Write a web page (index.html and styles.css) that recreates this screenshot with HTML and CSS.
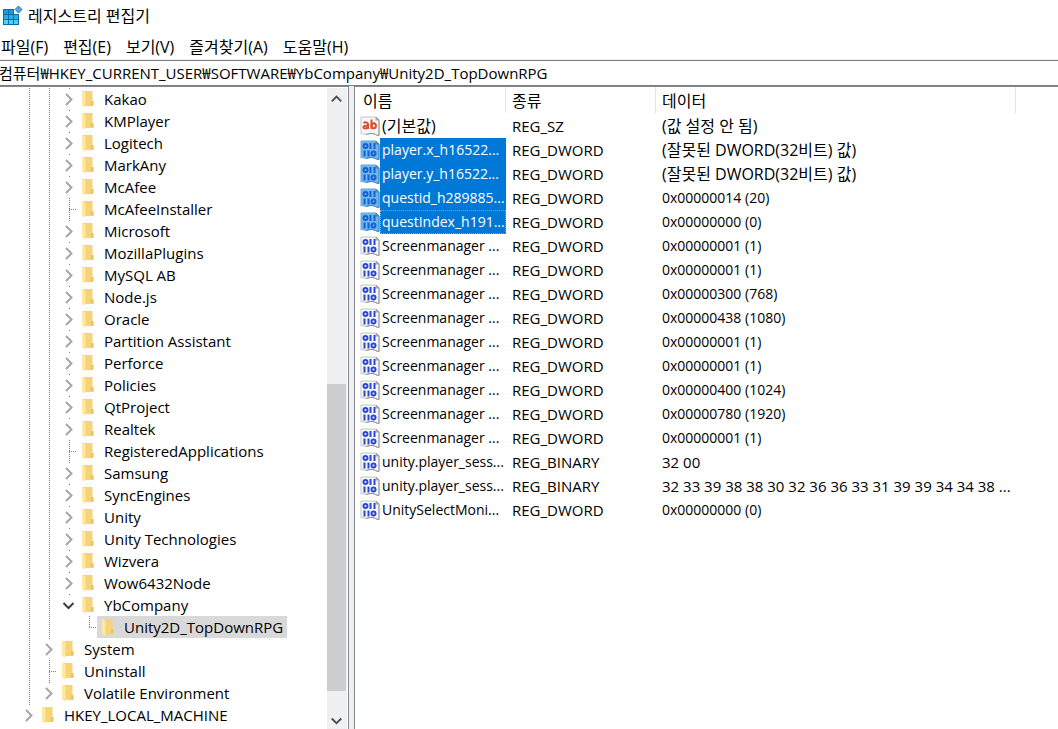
FILE: index.html
```html
<!DOCTYPE html>
<html lang="ko">
<head>
<meta charset="utf-8">
<title>레지스트리 편집기</title>
<link rel="stylesheet" href="styles.css">
</head>
<body>
<svg class="defs" aria-hidden="true">
  <symbol id="folder" viewBox="0 0 14 18">
    <path d="M2 1h9.500v10.500h.9V16H2z" fill="#f5d376"/>
    <path d="M10 11h2.500v4.500H10z" fill="#eec45e"/>
    <path d="M1 1h1.500L5 3.200v12L4 18 1 15.500z" fill="#ffe8a2"/>
    <path d="M4.500 3.500v12" stroke="#f9dd8b"/>
  </symbol>
  <symbol id="page" viewBox="0 0 20 20">
    <path class="paper" d="M1 1h15l3 3v15.500c-3 0-4-2-7-2s-4 .8-6 .8-3-.8-5-.8z"/>
    <path class="edge" d="M16 1l3 3v15.500c-3 0-4-2-7-2s-4 .8-6 .8"/>
    <path class="fold" d="M15.500 1v3.500H19z"/>
  </symbol>
  <symbol id="binary" viewBox="0 0 20 20">
    <use href="#page"/>
    <g class="digits">
      <ellipse cx="5.500" cy="6" rx="2" ry="2"/>
      <path d="M10.500 3v6M14.500 3v6M4.500 10.500v6M8.500 10.500v6"/>
      <ellipse cx="13.500" cy="13.500" rx="2" ry="2"/>
    </g>
  </symbol>
  <symbol id="string" viewBox="0 0 20 20">
    <use href="#page"/>
    <g fill="none" stroke="#d94d2c" stroke-width="2">
      <path d="M3.500 7c1.500-1 4.500-1 4.500 1.200V13M8 9.500c-2 0-4.500 0-4.500 1.700C3.500 13 7 13 8 11"/>
      <path d="M11.500 3.500V13"/><ellipse cx="13.700" cy="9.700" rx="2.200" ry="2.500"/>
    </g>
  </symbol>
  <symbol id="right" viewBox="0 0 20 22"><path d="M7 6l5.500 5.500L7 17" fill="none" stroke="#a6a6a6" stroke-width="2"/></symbol>
  <symbol id="down" viewBox="0 0 20 22"><path d="M4.500 9l5 5 5-5" fill="none" stroke="#404040" stroke-width="2"/></symbol>
</svg>

<header class="titlebar">
  <svg class="app-icon" viewBox="0 0 20 20" aria-hidden="true">
    <path d="M0 3h16v16H0z" fill="#0c6ea6"/>
    <path d="M1 4h4v4H1zM6 4h4v4H6z" fill="#1b9bd7"/>
    <path d="M1 9h4v4H1zM6 9h4v4H6zM11 9h4v4h-4z" fill="#24b1e8"/>
    <path d="M1 14h4v4H1zM6 14h4v4H6zM11 14h4v4h-4z" fill="#4fd0f8"/>
    <path d="M11 2h6v6h-6z" fill="#fff"/>
    <path d="M15.500 0l3.500 3.500L15.500 7 12 3.500z" fill="#43aede" stroke="#1d7fb4"/>
  </svg>
  <h1 class="title">레지스트리 편집기</h1>
</header>
<nav class="menubar">
  <button class="menu">파일(F)</button><button class="menu">편집(E)</button><button class="menu">보기(V)</button><button class="menu">즐겨찾기(A)</button><button class="menu">도움말(H)</button>
</nav>
<input class="address" aria-label="주소" value="컴퓨터₩HKEY_CURRENT_USER₩SOFTWARE₩YbCompany₩Unity2D_TopDownRPG">

<main class="panes">
  <section class="tree-pane">
    <ul class="tree" id="tree"></ul>
    <div class="scrollbar">
      <button class="scroll-button" aria-label="위로"><svg viewBox="0 0 20 24"><path d="M5 15l5-5 5 5" fill="none" stroke="#505050" stroke-width="2"/></svg></button>
      <div class="track-before"></div><div class="thumb"></div><div class="track-after"></div>
      <button class="scroll-button" aria-label="아래로"><svg viewBox="0 0 20 24"><path d="M5 12l5 5 5-5" fill="none" stroke="#505050" stroke-width="2"/></svg></button>
    </div>
  </section>
  <div class="splitter"></div>
  <section class="list-pane">
    <table class="values">
      <colgroup><col class="col-name"><col class="col-type"><col class="col-data"><col></colgroup>
      <thead><tr><th>이름</th><th>종류</th><th>데이터</th><th></th></tr></thead>
      <tbody id="values"></tbody>
    </table>
  </section>
</main>
<script src="app.js"></script>
</body>
</html>
```
FILE: styles.css
```css
* { box-sizing: border-box; }
body {
  margin: 0;
  height: 100vh;
  display: flex;
  flex-direction: column;
  overflow: hidden;
  background: #fff;
  color: #000;
  font: 15px/22px "Open Sans", "Noto Sans CJK KR", sans-serif;
}
button, input { font: inherit; color: inherit; border: 0; padding: 0; background: none; }
svg { display: block; }
.defs { position: absolute; width: 0; height: 0; }

.titlebar { display: flex; align-items: center; gap: 5px; height: 32px; padding-left: 3px; }
.app-icon { width: 20px; height: 20px; }
.title { margin: 0; font-size: 16px; font-weight: 400; }
.menubar { display: flex; align-items: center; gap: 15px; height: 28px; padding: 2px 0 0 1px; border-bottom: 1px solid #f0f0f0; font-size: 16px; }
.address { height: 26px; flex: none; margin-left: -1px; padding-bottom: 2px; border: solid #7a7a80; border-width: 1px 0; border-radius: 0; outline: 0; }

.panes { display: flex; flex: 1; min-height: 0; background: #f0f0f0; }
.tree-pane { display: flex; width: 349px; background: #fff; border: solid #828790; border-width: 1px 1px 0 0; }
.tree { flex: 1; margin: 0; padding: 1px 0 0 19px; list-style: none; overflow: hidden; }
.node { display: flex; height: 22px; white-space: nowrap; }
.cell { flex: none; width: 20px; height: 22px; }
.line { background: repeating-linear-gradient(#808080 0 1px, transparent 1px 2px) 10px 0 / 1px 100% no-repeat; }
.branch {
  background:
    repeating-linear-gradient(#808080 0 1px, transparent 1px 2px) 10px 0 / 1px 100% no-repeat,
    repeating-linear-gradient(90deg, #808080 0 1px, transparent 1px 2px) 10px 11px / 8px 1px no-repeat;
}
.branch.last { background-size: 1px 12px, 8px 1px; }
.expander { background: linear-gradient(#808080, #808080) 10px 0 / 1px 1px no-repeat; }
.item { display: flex; align-items: center; gap: 9px; margin-left: -2px; padding: 0 4px; }
.item.selected { background: #d9d9d9; }
.folder { width: 14px; height: 18px; }

.scrollbar { display: flex; flex-direction: column; width: 21px; padding-right: 2px; background: linear-gradient(#f0f0f0, #f0f0f0) 0 1px / 20px 100% no-repeat; }
.scroll-button { height: 22px; flex: none; }
.scroll-button svg { width: 19px; height: 23px; }
.track-before { flex: 275; }
.thumb { flex: 307; background: #cdcdcd; }
.track-after { flex: 16; }

.splitter { width: 5px; }
.list-pane { flex: 1; min-width: 0; background: #fff; border: solid #828790; border-width: 1px 0 0 1px; overflow: hidden; }
.values { width: 100%; table-layout: fixed; border-collapse: separate; border-spacing: 0; }
.col-name { width: 151px; }
.col-type { width: 150px; }
.col-data { width: 360px; }
th, td { padding: 0 0 0 6px; text-align: left; font-weight: 400; white-space: nowrap; }
th { height: 27px; font-size: 16px; background: linear-gradient(#e5e5e5, #e5e5e5) right 0 / 1px 26px no-repeat; }
th:first-child { padding-left: 8px; }
th:last-child { background: none; }
td { height: 24px; }
td:first-child { padding-left: 5px; }
.data, .label { font-size: 14px; }
.data.bytes { font-size: 15px; }
.data.korean, .label.korean { font-size: 16px; }
.name { display: flex; align-items: center; }
.name svg { flex: none; width: 20px; height: 20px; }
.label { flex: 1; height: 24px; padding-left: 2px; line-height: 24px; }
.paper { fill: var(--paper, #f7f7f8); stroke: var(--rim, #c6c6c8); }
.edge { fill: none; stroke: var(--shade, #929295); }
.fold { fill: var(--shade, #a9a9ad); }
.digits { fill: none; stroke: var(--ink, #2949d4); stroke-width: 2; }
.chosen { --paper: #6fb5ea; --rim: #62a6dc; --shade: #4a86b8; --ink: #1560d4; }
.chosen .label { background: #0078d7; color: #fff; }
.focused .label { outline: 1px dotted #ff8728; outline-offset: -1px; }
```
FILE: app.js
```js
const use = (id, cls = "") => `<svg class="${cls}"><use href="#${id}"/></svg>`;

// [guides, name]: | line, > collapsed, v expanded, + leaf, L last leaf, space empty
const nodes = [
  ["||>", "Kakao"], ["||>", "KMPlayer"], ["||>", "Logitech"], ["||>", "MarkAny"], ["||>", "McAfee"],
  ["||+", "McAfeeInstaller"], ["||>", "Microsoft"], ["||>", "MozillaPlugins"], ["||>", "MySQL AB"],
  ["||>", "Node.js"], ["||>", "Oracle"], ["||>", "Partition Assistant"], ["||>", "Perforce"],
  ["||>", "Policies"], ["||>", "QtProject"], ["||>", "Realtek"], ["||+", "RegisteredApplications"],
  ["||>", "Samsung"], ["||>", "SyncEngines"], ["||>", "Unity"], ["||>", "Unity Technologies"],
  ["||>", "Wizvera"], ["||>", "Wow6432Node"], ["||v", "YbCompany"], ["|| L", "Unity2D_TopDownRPG"],
  ["|>", "System"], ["|+", "Uninstall"], ["|>", "Volatile Environment"], [">", "HKEY_LOCAL_MACHINE"]
];
const cells = {
  "|": '<span class="cell line"></span>',
  " ": '<span class="cell"></span>',
  "+": '<span class="cell branch"></span>',
  "L": '<span class="cell branch last"></span>',
  ">": `<button class="cell expander" aria-label="확장">${use("right", "cell")}</button>`,
  "v": `<button class="cell expander" aria-label="축소">${use("down", "cell")}</button>`
};
document.getElementById("tree").innerHTML = nodes.map(([guides, name]) =>
  `<li class="node">${[...guides].map(c => cells[c]).join("")}<span class="item${guides.includes("L") ? " selected" : ""}">${use("folder", "folder")}<span>${name}</span></span></li>`
).join("");

const D = "REG_DWORD", B = "REG_BINARY", S = "Screenmanager ...";
const values = [
  ["(기본값)", "REG_SZ", "(값 설정 안 됨)"],
  ["player.x_h16522...", D, "(잘못된 DWORD(32비트) 값)", "chosen"],
  ["player.y_h16522...", D, "(잘못된 DWORD(32비트) 값)", "chosen"],
  ["questid_h289885...", D, "0x00000014 (20)", "chosen"],
  ["questIndex_h191...", D, "0x00000000 (0)", "chosen focused"],
  [S, D, "0x00000001 (1)"], [S, D, "0x00000001 (1)"], [S, D, "0x00000300 (768)"],
  [S, D, "0x00000438 (1080)"], [S, D, "0x00000001 (1)"], [S, D, "0x00000001 (1)"],
  [S, D, "0x00000400 (1024)"], [S, D, "0x00000780 (1920)"], [S, D, "0x00000001 (1)"],
  ["unity.player_sess...", B, "32 00"],
  ["unity.player_sess...", B, "32 33 39 38 38 30 32 36 36 33 31 39 39 34 34 38 ..."],
  ["UnitySelectMoni...", D, "0x00000000 (0)"]
];
const size = text => /[가-힣]/.test(text) ? "korean" : "";
document.getElementById("values").innerHTML = values.map(([name, type, data, state = ""]) =>
  `<tr class="${state}"><td><div class="name">${use(type === "REG_SZ" ? "string" : "binary")}<span class="label ${size(name)}">${name}</span></div></td><td>${type}</td><td class="data ${type === B ? "bytes" : size(data)}">${data}</td><td></td></tr>`
).join("");
```
